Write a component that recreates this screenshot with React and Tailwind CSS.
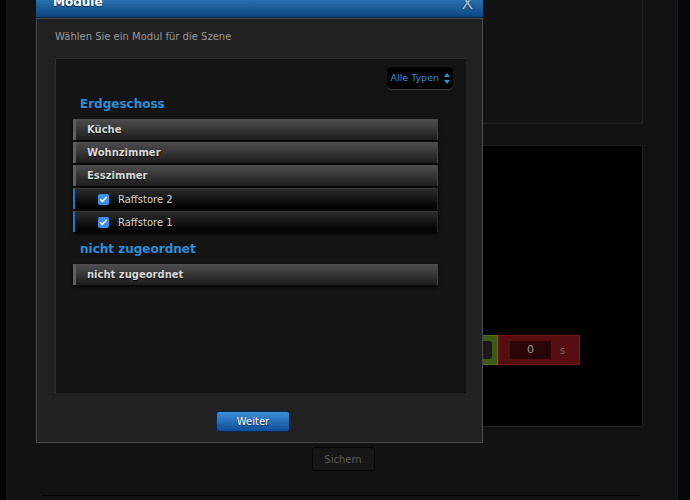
import { Check } from 'lucide-react';

const floors = [
  {
    name: 'Erdgeschoss',
    rooms: [
      { name: 'Küche', modules: [] },
      { name: 'Wohnzimmer', modules: [] },
      { name: 'Esszimmer', modules: ['Raffstore 2', 'Raffstore 1'] },
    ],
  },
  {
    name: 'nicht zugeordnet',
    rooms: [{ name: 'nicht zugeordnet', modules: [] }],
  },
];

function RoomRow({ name }) {
  return (
    <div className="flex h-[21px] items-center border-l-[3px] border-r border-l-[#5e5e5e] border-r-[#474747] bg-gradient-to-b from-[#4e4e4e] via-[#363636] to-[#1c1c1c] pl-[11px] text-[10px] font-bold text-[#dadada] shadow-[0_2px_3px_rgba(0,0,0,0.7)] [text-shadow:0_1px_1px_#000]">
      {name}
    </div>
  );
}

function ModuleRow({ name }) {
  return (
    <div className="flex h-[21px] items-center gap-[9px] border-l-2 border-r border-l-[#2274c4] border-r-[#2a2a2a] border-t border-t-[#383838] bg-gradient-to-b from-[#2c2c2c] via-[#151515] to-[#020202] pl-[23px] text-[10px] text-[#d6d6d6] shadow-[0_2px_3px_rgba(0,0,0,0.7)] [text-shadow:0_1px_1px_#000]">
      <span className="flex h-[11px] w-[11px] items-center justify-center rounded-[2px] bg-[#3b8fea]">
        <Check className="h-[9px] w-[9px] text-white" strokeWidth={4} />
      </span>
      {name}
    </div>
  );
}

export default function App() {
  return (
    <div className="relative flex h-[500px] w-[690px] overflow-hidden bg-[#03050a] font-['DejaVu_Sans',sans-serif]">
      {/* page behind the dialog */}
      <div className="w-[6px] bg-[#020202]" />
      <div className="flex w-[672px] flex-col border-r border-[#1b1b1b] bg-[#121212] pl-[37px] pr-[34px]">
        <div className="h-[124px] border border-t-0 border-[#1f1f1f] bg-[#131313]" />
        <div className="mt-[21px] h-[282px] border border-[#1f1f1f] bg-black pt-[189px] pl-[396px]">
          <div className="flex h-[30px]">
            <div className="flex w-[58px] items-center justify-end border border-[#4f6e1c] bg-[#3c5a14] pr-[5px]">
              <div className="h-[18px] w-[16px] rounded-[3px] bg-[#1a1a1a]" />
            </div>
            <div className="flex w-[82px] items-center border border-[#6e1619] bg-[#560e10] pl-[11px]">
              <div className="flex h-[18px] w-[41px] items-center justify-center bg-[#2a0507] text-[11px] text-[#9a9a9a]">
                0
              </div>
              <span className="ml-[9px] text-[10px] text-[#8a6a6a]">s</span>
            </div>
          </div>
        </div>
        <div className="mt-[20px] flex justify-center">
          <div className="flex h-[24px] w-[63px] items-center justify-center rounded-[3px] border border-[#050505] bg-[#161616] text-[10px] text-[#5e5e5e]">
            Sichern
          </div>
        </div>
        <div className="mt-[24px] mr-[3px] border-t border-[#040404]" />
      </div>
      <div className="flex-1" />

      {/* Dialog */}
      <div className="absolute left-[36px] top-[-10px] w-[447px]">
        <div className="flex h-[28px] items-start justify-between border-b border-[#0a2640] bg-gradient-to-b from-[#3a8ad0] to-[#0c4680] pl-[17px] pr-[10px] pt-[5px]">
          <span className="text-[12px] font-bold leading-[14px] text-white [text-shadow:0_1px_1px_#0a2a4a]">Module</span>
          <span className="mt-[-1px] font-['Liberation_Sans',sans-serif] text-[17px] leading-[20px] text-[#b4c3d2] [text-shadow:0_0_2px_#0a2038]">
            X
          </span>
        </div>
        <div className="border border-[#4b4b4b] bg-[#212121] pl-[18px] pr-[16px] pt-[12px] pb-[10px]">
          <p className="text-[10px] leading-[12px] text-[#9a9a9a]">Wählen Sie ein Modul für die Szene</p>
          <div className="mt-[15px] flex h-[335px] flex-col border-l border-t border-[#2e2e2e] bg-[#141414]">
            <div className="mt-[8px] flex justify-end pr-[13px]">
              <div className="flex h-[23px] items-center gap-[5px] rounded-[5px] border-b border-[#3a3a3a] bg-black pl-[4px] pr-[3px] text-[9.5px] text-[#2f90dc]">
                Alle Typen
                <svg width="6" height="11" viewBox="0 0 6 11">
                  <path d="M3 0 L6 4 L0 4 Z" fill="#2f90dc" />
                  <path d="M3 11 L6 7 L0 7 Z" fill="#2f90dc" />
                </svg>
              </div>
            </div>
            <div className="pl-[17px] pr-[28px]">
              {floors.map((floor, i) => (
                <div key={floor.name} className={i === 0 ? 'mt-[7px]' : 'mt-[10px]'}>
                  <h2 className="mb-[8px] pl-[7px] text-[12px] font-bold leading-[14px] text-[#2b8fd8]">{floor.name}</h2>
                  <div className="flex flex-col gap-[2px]">
                    {floor.rooms.map((room) => (
                      <div key={room.name} className="flex flex-col gap-[2px]">
                        <RoomRow name={room.name} />
                        {room.modules.map((m) => (
                          <ModuleRow key={m} name={m} />
                        ))}
                      </div>
                    ))}
                  </div>
                </div>
              ))}
            </div>
          </div>
          <div className="mt-[18px] flex">
            <div className="ml-[161px] flex h-[21px] w-[74px] items-center justify-center rounded-[3px] border border-[#0a2850] bg-gradient-to-b from-[#3e8fdc] to-[#0d4d96] text-[10px] text-white [text-shadow:0_1px_1px_#0a2a4a]">
              Weiter
            </div>
          </div>
        </div>
      </div>
    </div>
  );
}
